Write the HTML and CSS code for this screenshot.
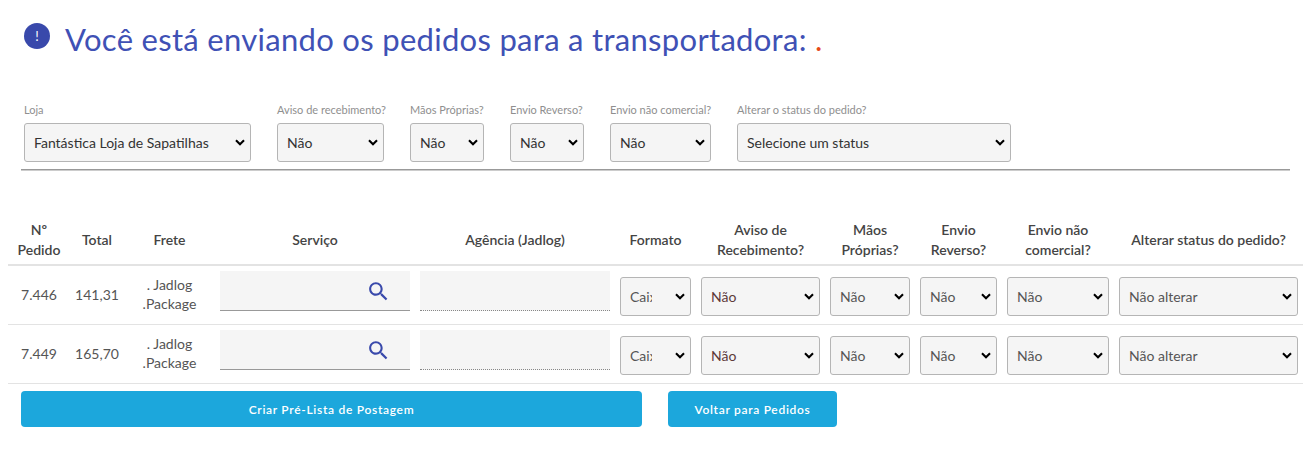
FILE: index.html
```html
<!DOCTYPE html>
<html lang="pt-BR">
<head>
    <meta charset="UTF-8">
    <meta name="viewport" content="width=device-width, initial-scale=1.0">
    <title>Enviar pedidos</title>
    <link rel="stylesheet" href="styles.css">
</head>
<body>

    <div class="heading">
        <span class="alertIcon">!</span>
        <h1>Você está enviando os pedidos para a transportadora: <span class="carrier">.</span></h1>
    </div>

    <form class="filters">
        <label class="field wLoja">Loja
            <select><option>Fantástica Loja de Sapatilhas</option></select>
        </label>
        <label class="field wAviso">Aviso de recebimento?
            <select><option>Não</option></select>
        </label>
        <label class="field wSmall">Mãos Próprias?
            <select><option>Não</option></select>
        </label>
        <label class="field wSmall">Envio Reverso?
            <select><option>Não</option></select>
        </label>
        <label class="field wComercial">Envio não comercial?
            <select><option>Não</option></select>
        </label>
        <label class="field wStatus">Alterar o status do pedido?
            <select><option>Selecione um status</option></select>
        </label>
    </form>
    <hr class="divider">

    <table class="orders">
        <colgroup>
            <col class="colNum">
            <col class="colTotal">
            <col class="colFrete">
            <col class="colInput">
            <col class="colInput">
            <col class="colFormato">
            <col class="colAviso">
            <col class="colMaos">
            <col class="colReverso">
            <col class="colComercial">
            <col class="colStatus">
        </colgroup>
        <thead>
            <tr>
                <th>Nº<br>Pedido</th>
                <th>Total</th>
                <th>Frete</th>
                <th>Serviço</th>
                <th>Agência (Jadlog)</th>
                <th>Formato</th>
                <th>Aviso de<br>Recebimento?</th>
                <th>Mãos<br>Próprias?</th>
                <th>Envio<br>Reverso?</th>
                <th>Envio não<br>comercial?</th>
                <th>Alterar status do pedido?</th>
            </tr>
        </thead>
        <tbody>
            <tr>
                <td>7.446</td>
                <td>141,31</td>
                <td>. Jadlog<br>.Package</td>
                <td>
                    <div class="searchBox">
                        <input type="text">
                        <svg class="searchIcon" viewBox="0 0 24 24"><path d="M15.5 14h-.79l-.28-.27C15.41 12.59 16 11.11 16 9.5 16 5.91 13.09 3 9.5 3S3 5.91 3 9.5 5.91 16 9.5 16c1.61 0 3.09-.59 4.23-1.57l.27.28v.79l5 4.99L20.49 19l-4.99-5zm-6 0C7.01 14 5 11.99 5 9.5S7.01 5 9.5 5 14 7.01 14 9.5 11.99 14 9.5 14z"/></svg>
                    </div>
                </td>
                <td><input class="disabledInput" type="text" disabled></td>
                <td><select class="formatSelect"><option>Caixa</option></select></td>
                <td><select class="warn"><option>Não</option></select></td>
                <td><select><option>Não</option></select></td>
                <td><select><option>Não</option></select></td>
                <td><select><option>Não</option></select></td>
                <td><select><option>Não alterar</option></select></td>
            </tr>
            <tr>
                <td>7.449</td>
                <td>165,70</td>
                <td>. Jadlog<br>.Package</td>
                <td>
                    <div class="searchBox">
                        <input type="text">
                        <svg class="searchIcon" viewBox="0 0 24 24"><path d="M15.5 14h-.79l-.28-.27C15.41 12.59 16 11.11 16 9.5 16 5.91 13.09 3 9.5 3S3 5.91 3 9.5 5.91 16 9.5 16c1.61 0 3.09-.59 4.23-1.57l.27.28v.79l5 4.99L20.49 19l-4.99-5zm-6 0C7.01 14 5 11.99 5 9.5S7.01 5 9.5 5 14 7.01 14 9.5 11.99 14 9.5 14z"/></svg>
                    </div>
                </td>
                <td><input class="disabledInput" type="text" disabled></td>
                <td><select class="formatSelect"><option>Caixa</option></select></td>
                <td><select class="warn"><option>Não</option></select></td>
                <td><select><option>Não</option></select></td>
                <td><select><option>Não</option></select></td>
                <td><select><option>Não</option></select></td>
                <td><select><option>Não alterar</option></select></td>
            </tr>
        </tbody>
    </table>

    <div class="actions">
        <button class="btn btnCreate" type="button">Criar Pré-Lista de Postagem</button>
        <button class="btn btnBack" type="button">Voltar para Pedidos</button>
    </div>

</body>
</html>
```

FILE: styles.css
```css
body {
    margin: 0;
    font-family: Lato, "Open Sans", sans-serif;
    background-color: #fff;
    color: #555;
}
.heading {
    display: flex;
    align-items: flex-start;
    gap: 15px;
    padding: 23px 0 0 24px;
    height: 80px;
}
.alertIcon {
    width: 26px;
    height: 26px;
    border-radius: 50%;
    background-color: #3949ab;
    color: #fff;
    font-size: 13px;
    line-height: 26px;
    text-align: center;
}
h1 {
    margin: -1px 0 0;
    font-size: 31px;
    line-height: 34px;
    font-weight: normal;
    color: #3f51b5;
    letter-spacing: 0.3px;
}
.carrier {
    color: #e64a19;
}
.filters {
    display: flex;
    gap: 26px;
    padding-left: 24px;
}
.field {
    display: block;
    font-size: 11px;
    line-height: 14px;
    color: #8f8f8f;
    white-space: nowrap;
}
.field select {
    display: block;
    width: 100%;
    margin-top: 6px;
    color: #333;
}
.wLoja { width: 227px; }
.wAviso { width: 107px; }
.wSmall { width: 74px; }
.wComercial { width: 101px; }
.wStatus { width: 274px; }
select {
    appearance: none;
    height: 39px;
    padding: 0 20px 0 9px;
    font-family: inherit;
    font-size: 14px;
    color: #555;
    background-color: #f5f5f5;
    background-image: url("data:image/svg+xml,%3Csvg xmlns='http://www.w3.org/2000/svg' width='10' height='7'%3E%3Cpath d='M1 1.2l4 4 4-4' fill='none' stroke='%23000' stroke-width='2.1'/%3E%3C/svg%3E");
    background-repeat: no-repeat;
    background-position: right 5px center;
    border: 1px solid #b5b5b5;
    border-radius: 3px;
}
.divider {
    margin: 7px 22px 0 21px;
    border: 0;
    border-top: 1px solid #999;
    border-bottom: 1px solid #ccc;
}
.orders {
    width: 1295px;
    margin: 49px 0 0 8px;
    border-collapse: collapse;
    table-layout: fixed;
    font-size: 14px;
}
.colNum { width: 62px; }
.colTotal { width: 54px; }
.colFrete { width: 91px; }
.colInput { width: 200px; }
.colFormato { width: 81px; }
.colAviso { width: 129px; }
.colMaos { width: 90px; }
.colReverso { width: 87px; }
.colComercial { width: 112px; }
.colStatus { width: 189px; }
.orders th {
    padding: 0 5px 4px;
    height: 40px;
    font-weight: 600;
    line-height: 20px;
    color: #444;
    text-align: center;
    border-bottom: 2px solid #e3e3e3;
}
.orders td {
    height: 56px;
    padding: 0 5px 2px;
    line-height: 19px;
    text-align: center;
    border-bottom: 1px solid #e3e3e3;
}
.orders select {
    width: 100%;
    margin-top: 4px;
}
.orders select.warn {
    color: #5d3a3a;
}
/* "Caixa" fica cortado na coluna estreita */
.orders select.formatSelect {
    padding-right: 38px;
}
.orders input {
    display: block;
    box-sizing: border-box;
    width: 100%;
    height: 40px;
    margin-bottom: 6px;
    background-color: #f5f5f5;
    border: 0;
    border-bottom: 1px solid #999;
}
.orders input.disabledInput {
    border-bottom: 1px dotted #888;
}
.searchBox {
    position: relative;
}
.searchIcon {
    position: absolute;
    top: 8px;
    left: 146px;
    width: 25px;
    height: 25px;
    fill: #3949ab;
}
.actions {
    display: flex;
    gap: 26px;
    padding: 7px 0 0 21px;
}
.btn {
    height: 36px;
    font-family: inherit;
    font-size: 12px;
    font-weight: 600;
    color: #fff;
    background-color: #1ca7dc;
    border: 0;
    border-radius: 4px;
    letter-spacing: 0.7px;
}
.btnCreate { width: 621px; }
.btnBack { width: 169px; }
```
